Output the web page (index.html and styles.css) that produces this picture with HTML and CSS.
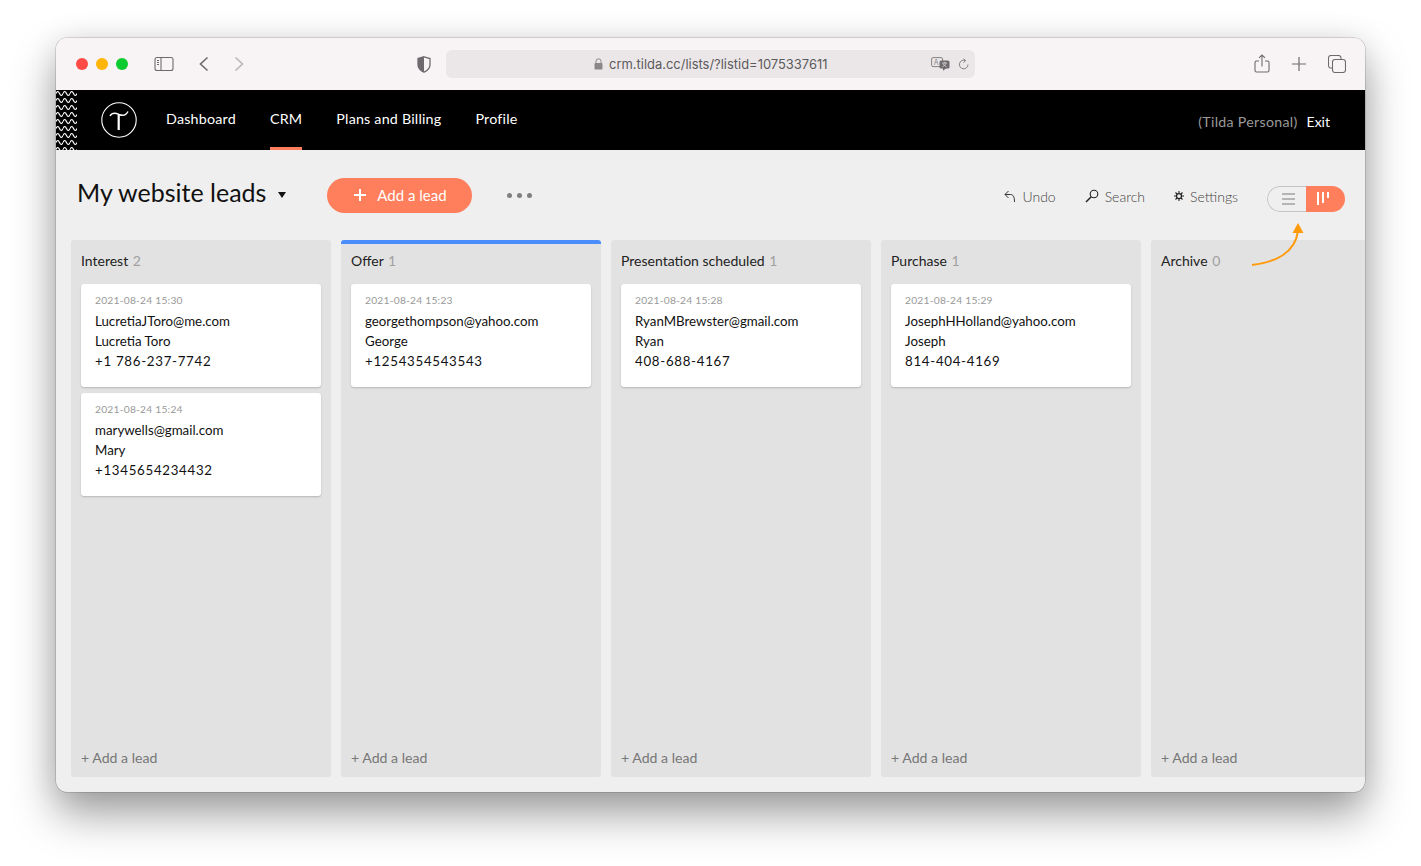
FILE: index.html
```html
<!DOCTYPE html>
<html lang="en">
<head>
    <meta charset="UTF-8">
    <title>My website leads</title>
    <link rel="stylesheet" href="styles.css">
</head>
<body>
    <div class="window">
        <div class="toolbar">
            <div class="lights">
                <span class="light red"></span>
                <span class="light yellow"></span>
                <span class="light green"></span>
            </div>
            <svg class="tb-sidebar" width="20" height="16" viewBox="0 0 20 16" fill="none" stroke="#6e6b6e" stroke-width="1.1">
                <rect x="1" y="1.5" width="18" height="13" rx="2"/>
                <path d="M7 1.5v13M3 4.5h2M3 6.5h2M3 8.5h2"/>
            </svg>
            <svg class="tb-back" width="12" height="16" viewBox="0 0 12 16" fill="none" stroke="#6e6b6e" stroke-width="1.6">
                <path d="M9.5 1.5 2.5 8l7 6.5"/>
            </svg>
            <svg class="tb-forward" width="12" height="16" viewBox="0 0 12 16" fill="none" stroke="#b9b6b9" stroke-width="1.6">
                <path d="M2.5 1.5 9.5 8l-7 6.5"/>
            </svg>
            <svg class="tb-shield" width="14" height="17" viewBox="0 0 14 17">
                <path d="M7 .8 13 2.500v6c0 3.600-2.600 6.200-6 7.700-3.400-1.500-6-4.100-6-7.700v-6z" fill="none" stroke="#6e6b6e" stroke-width="1.3"/>
                <path d="M7 .8 1 2.500v6c0 3.600 2.600 6.200 6 7.700z" fill="#6e6b6e"/>
            </svg>
            <div class="address">
                <svg class="lock" width="9" height="12" viewBox="0 0 9 12">
                    <path d="M2 5V3.300a2.500 2.500 0 0 1 5 0V5" fill="none" stroke="#8a878a" stroke-width="1"/>
                    <rect x=".5" y="5" width="8" height="6.500" rx="1" fill="#8a878a"/>
                </svg>
                <span class="url">crm.tilda.cc/lists/?listid=1075337611</span>
                <svg class="translate" width="19" height="14" viewBox="0 0 19 14">
                    <rect x=".6" y=".6" width="11" height="9" rx="1.500" fill="none" stroke="#858285"/>
                    <text x="2.800" y="7.500" class="translate-a">A</text>
                    <rect x="8.500" y="3.500" width="10" height="8" rx="1.500" fill="#6e6b6e"/>
                    <path d="M12 13.800v-2.800h3.500z" fill="#6e6b6e"/>
                    <path d="M11 6h5M13.500 5v1M15 6c-.5 2-2 3-3.500 3.500M12 6.500c.5 1.500 2 2.500 3.500 3" fill="none" stroke="#ebe7e9" stroke-width=".7"/>
                </svg>
                <svg class="reload" width="11" height="13" viewBox="0 0 11 13" fill="none" stroke="#858285" stroke-width="1">
                    <path d="M7.500 2.600A4.300 4.300 0 1 0 10 6.500"/>
                    <path d="M5.500.6 7.700 2.600 5.500 4.500"/>
                </svg>
            </div>
            <div class="tb-right">
                <svg width="16" height="20" viewBox="0 0 16 20" fill="none" stroke="#6e6b6e" stroke-width="1.100">
                    <path d="M5 7H2.500A1.500 1.500 0 0 0 1 8.500v8A1.500 1.500 0 0 0 2.500 18h11a1.500 1.500 0 0 0 1.500-1.500v-8A1.500 1.500 0 0 0 13.500 7H11"/>
                    <path d="M8 12.500V1M5 3.800 8 1l3 2.800"/>
                </svg>
                <svg width="14" height="14" viewBox="0 0 14 14" fill="none" stroke="#6e6b6e" stroke-width="1.200">
                    <path d="M7 0v14M0 7h14"/>
                </svg>
                <svg width="18" height="18" viewBox="0 0 18 18" fill="none" stroke="#6e6b6e" stroke-width="1.100">
                    <rect x="4.500" y="4.500" width="13" height="13" rx="2.500"/>
                    <path d="M4.500 13H3a2.500 2.500 0 0 1-2.500-2.500V3A2.500 2.500 0 0 1 3 .5h7.500A2.500 2.500 0 0 1 13 3v1.500"/>
                </svg>
            </div>
        </div>

        <div class="nav">
            <svg class="nav-pattern" width="21" height="60" viewBox="0 0 21 60">
                <defs>
                    <pattern id="waves" width="7" height="7" patternUnits="userSpaceOnUse">
                        <path d="M0 3.500Q1.750 -.5 3.500 3.500T7 3.500" fill="none" stroke="#fff" stroke-width="1.200"/>
                    </pattern>
                </defs>
                <rect width="21" height="60" fill="url(#waves)"/>
            </svg>
            <svg class="nav-logo" width="36" height="36" viewBox="0 0 36 36" fill="none" stroke="#fff">
                <circle cx="18" cy="18" r="17.200" stroke-width="1.100"/>
                <path d="M9 14C11 10.500 14 10.500 18 12.500 21.500 14 25 13.500 27 9.500" stroke-width="1.400"/>
                <path d="M17.700 13V28" stroke-width="2.200"/>
            </svg>
            <a class="nav-link">Dashboard</a>
            <a class="nav-link">CRM</a>
            <a class="nav-link">Plans and Billing</a>
            <a class="nav-link">Profile</a>
            <span class="nav-plan">(Tilda Personal)</span>
            <a class="nav-exit">Exit</a>
        </div>

        <div class="page">
            <div class="page-head">
                <h1 class="page-title">My website leads</h1>
                <span class="title-caret"></span>
                <button class="add-btn">
                    <svg width="14" height="14" viewBox="0 0 14 14" stroke="#fff" stroke-width="2">
                        <path d="M7 1v12M1 7h12"/>
                    </svg>Add a lead
                </button>
                <div class="dots"><span></span><span></span><span></span></div>
                <div class="actions">
                    <span class="action">
                        <svg width="12" height="13" viewBox="0 0 12 13" fill="none" stroke="#333" stroke-width="1">
                            <path d="M4.500 1 1 4.500 4.500 8M1 4.500h5.500C9 4.500 10.500 6.500 10.500 12"/>
                        </svg>Undo
                    </span>
                    <span class="action">
                        <svg width="14" height="14" viewBox="0 0 14 14" fill="none" stroke="#222" stroke-width="1.100">
                            <circle cx="9" cy="5" r="3.800"/>
                            <path d="M6.200 7.800 1 13" stroke-width="1.500"/>
                        </svg>Search
                    </span>
                    <span class="action">
                        <svg width="10" height="10" viewBox="0 0 12 12" fill="none" stroke="#222">
                            <circle cx="6" cy="6" r="3" stroke-width="1.500"/>
                            <path d="M6 0v2.500M6 9.500V12M0 6h2.500M9.500 6H12M1.800 1.800l1.800 1.800M8.400 8.400l1.800 1.800M1.800 10.200l1.800-1.800M8.400 3.600l1.800-1.800" stroke-width="1.300"/>
                        </svg>Settings
                    </span>
                </div>
                <div class="view-toggle">
                    <span class="view-list"><i></i><i></i><i></i></span>
                    <span class="view-board"><i class="b1"></i><i class="b2"></i><i class="b3"></i></span>
                </div>
            </div>

            <div class="board">
                <div class="column">
                    <div class="col-title">Interest <span>2</span></div>
                    <div class="card">
                        <div class="card-date">2021-08-24 15:30</div>
                        <div>LucretiaJToro@me.com</div>
                        <div>Lucretia Toro</div>
                        <div class="phone">+1 786-237-7742</div>
                    </div>
                    <div class="card">
                        <div class="card-date">2021-08-24 15:24</div>
                        <div>marywells@gmail.com</div>
                        <div>Mary</div>
                        <div class="phone">+1345654234432</div>
                    </div>
                    <div class="col-add">+ Add a lead</div>
                </div>
                <div class="column blue">
                    <div class="col-title">Offer <span>1</span></div>
                    <div class="card">
                        <div class="card-date">2021-08-24 15:23</div>
                        <div>georgethompson@yahoo.com</div>
                        <div>George</div>
                        <div class="phone">+1254354543543</div>
                    </div>
                    <div class="col-add">+ Add a lead</div>
                </div>
                <div class="column">
                    <div class="col-title">Presentation scheduled <span>1</span></div>
                    <div class="card">
                        <div class="card-date">2021-08-24 15:28</div>
                        <div>RyanMBrewster@gmail.com</div>
                        <div>Ryan</div>
                        <div class="phone">408-688-4167</div>
                    </div>
                    <div class="col-add">+ Add a lead</div>
                </div>
                <div class="column">
                    <div class="col-title">Purchase <span>1</span></div>
                    <div class="card">
                        <div class="card-date">2021-08-24 15:29</div>
                        <div>JosephHHolland@yahoo.com</div>
                        <div>Joseph</div>
                        <div class="phone">814-404-4169</div>
                    </div>
                    <div class="col-add">+ Add a lead</div>
                </div>
                <div class="column">
                    <div class="col-title">Archive <span>0</span></div>
                    <div class="col-add">+ Add a lead</div>
                </div>
            </div>

            <svg class="arrow" width="54" height="46" viewBox="0 0 54 46" fill="none">
                <path d="M1 42C24 39 44 31 47 8" stroke="#ff9a0a" stroke-width="2"/>
                <path d="M47 0 52.500 10H41.500z" fill="#ff9a0a"/>
            </svg>
        </div>
    </div>
</body>
</html>
```

FILE: styles.css
```css
* {
    box-sizing: border-box;
}

html, body {
    height: 100%;
}

body {
    margin: 0;
    padding: 38px 56px 74px;
    background: #fff;
    font-family: 'Lato', 'Open Sans', sans-serif;
    color: #111;
    overflow: hidden;
}

.window {
    height: 754px;
    border-radius: 11px;
    overflow: hidden;
    display: flex;
    flex-direction: column;
    background: #efefef;
    box-shadow: 0 0 0 0.5px rgba(0, 0, 0, 0.25), 0 22px 44px rgba(0, 0, 0, 0.38), 0 0 30px rgba(0, 0, 0, 0.08);
}

/* browser toolbar */
.toolbar {
    height: 52px;
    flex: none;
    display: flex;
    align-items: center;
    background: #f8f3f5;
    padding-left: 20px;
}

.lights {
    display: flex;
    gap: 8px;
}

.light {
    width: 12px;
    height: 12px;
    border-radius: 50%;
}

.red { background: #ff4b45; }
.yellow { background: #ffb505; }
.green { background: #0ccb2e; }

.tb-sidebar { margin-left: 26px; }
.tb-back { margin-left: 24px; }
.tb-forward { margin-left: 23px; }
.tb-shield { margin-left: 172px; }

.address {
    width: 529px;
    height: 28px;
    margin-left: 15px;
    border-radius: 6px;
    background: #ebe7e9;
    display: flex;
    align-items: center;
    padding-left: 148px;
    font-family: 'Inter', sans-serif;
    font-size: 12.95px;
    color: #5c5a5c;
}

.lock { margin-right: 6px; }
.url { width: 322px; white-space: nowrap; }
.reload { margin-left: 8px; }

.translate-a {
    font-size: 7px;
    fill: #858285;
}

.tb-right {
    margin-left: auto;
    width: 111px;
    padding-right: 19px;
    display: flex;
    align-items: center;
    justify-content: space-between;
}

/* tilda nav */
.nav {
    height: 60px;
    flex: none;
    background: #000;
    display: flex;
    align-items: center;
    color: #fff;
    font-size: 14.3px;
}

.nav-pattern { flex: none; }

.nav-logo {
    margin-left: 24px;
    margin-right: 29px;
}

.nav-link {
    height: 60px;
    line-height: 57px;
    margin-right: 34px;
    letter-spacing: 0.2px;
    position: relative;
}

.nav-link:nth-of-type(2)::after {
    content: "";
    position: absolute;
    left: 0;
    right: 0;
    bottom: 0;
    height: 3px;
    background: #ff7e5c;
}

.nav-plan {
    margin-left: auto;
    color: #9a9a9a;
    font-size: 14.2px;
    margin-top: 2px;
    letter-spacing: 0.3px;
}

.nav-exit {
    margin: 2px 35px 0 9px;
    font-size: 14px;
}

/* page */
.page {
    flex: 1;
    position: relative;
    min-height: 0;
    display: flex;
    flex-direction: column;
    padding-bottom: 15px;
}

.page-head {
    height: 90px;
    flex: none;
    display: flex;
    align-items: center;
    padding: 0 20px 0 21px;
}

.page-title {
    margin: 0 0 6px;
    font-size: 25px;
    font-weight: 400;
    color: #111;
}

.title-caret {
    margin-left: 12px;
    width: 0;
    height: 0;
    border-left: 4px solid transparent;
    border-right: 4px solid transparent;
    border-top: 6px solid #111;
}

.add-btn {
    margin-left: 41px;
    width: 145px;
    height: 35px;
    border: none;
    border-radius: 18px;
    background: #ff7e5c;
    color: #fff;
    font-family: inherit;
    font-size: 15px;
    padding: 0;
    display: flex;
    align-items: center;
    justify-content: center;
    gap: 10px;
}

.dots {
    margin-left: 35px;
    display: flex;
    gap: 5px;
}

.dots span {
    width: 5px;
    height: 5px;
    border-radius: 50%;
    background: #808080;
}

.actions {
    margin-left: auto;
    margin-top: 2px;
    display: flex;
    gap: 29px;
    font-size: 14px;
    font-weight: 300;
    color: #444;
}

.action {
    display: flex;
    align-items: center;
    gap: 6px;
}

.view-toggle {
    margin-left: 29px;
    margin-top: 8px;
    width: 78px;
    height: 26px;
    display: flex;
    border-radius: 13px;
    overflow: hidden;
}

.view-list {
    width: 39px;
    border: 1px solid #c4c4c4;
    border-right: none;
    border-radius: 13px 0 0 13px;
    display: flex;
    flex-direction: column;
    align-items: center;
    justify-content: center;
    gap: 3px;
    padding-left: 2px;
}

.view-list i {
    width: 13px;
    height: 2px;
    background: #b5b5b5;
}

.view-board {
    width: 39px;
    background: #ff7e5c;
    display: flex;
    justify-content: flex-start;
    gap: 3px;
    padding: 6px 0 0 11px;
}

.view-board i {
    width: 2px;
    background: #fff;
}

.b1 { height: 13px; }
.b2 { height: 11px; }
.b3 { height: 6px; }

/* board */
.board {
    flex: 1;
    min-height: 0;
    display: flex;
    gap: 10px;
    padding-left: 15px;
    overflow: hidden;
}

.column {
    width: 260px;
    flex: none;
    background: #e2e2e2;
    border-radius: 3px;
    padding: 0 10px;
    display: flex;
    flex-direction: column;
}

.column.blue {
    border-top: 4px solid #4a8dfb;
}

.col-title {
    height: 44px;
    line-height: 41px;
    font-size: 14px;
    flex: none;
    color: #222;
}

.blue .col-title {
    height: 40px;
    line-height: 33px;
}

.col-title span {
    color: #a0a0a0;
    margin-left: 1px;
}

.card {
    height: 103px;
    flex: none;
    background: #fff;
    border-radius: 3px;
    padding: 9px 14px 0;
    margin-bottom: 6px;
    font-size: 13.3px;
    line-height: 20px;
    color: #111;
    box-shadow: 0 1px 2px rgba(0, 0, 0, 0.2);
    white-space: nowrap;
}

.card-date {
    font-size: 10.3px;
    line-height: 14px;
    color: #999;
    margin-bottom: 4px;
    letter-spacing: 0.2px;
}

.phone {
    letter-spacing: 0.7px;
}

.col-add {
    margin-top: auto;
    height: 38px;
    line-height: 38px;
    font-size: 14.1px;
    color: #777;
}

.arrow {
    position: absolute;
    left: 1195px;
    top: 73px;
}
```
